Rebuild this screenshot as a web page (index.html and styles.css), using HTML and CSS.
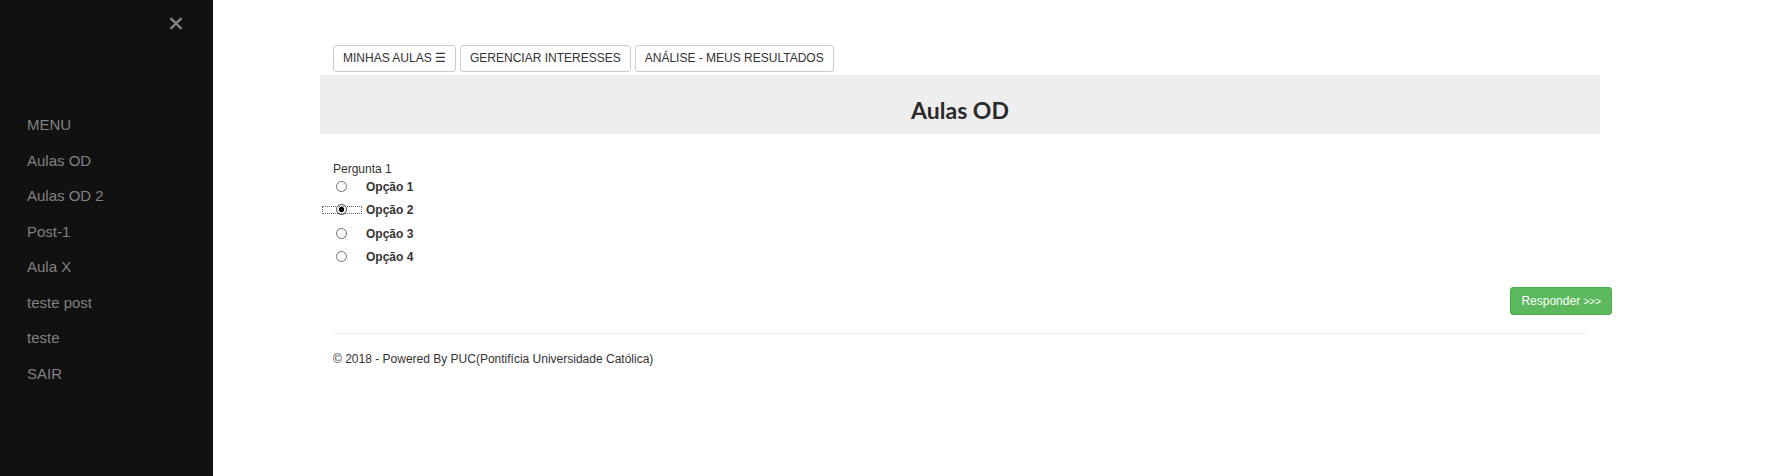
FILE: index.html
```
<!DOCTYPE html>
<html lang="pt">
<head>
<meta charset="utf-8">
<title>Aulas OD</title>
<link rel="stylesheet" href="styles.css">
</head>
<body>
<aside class="sidenav">
  <a class="closebtn" href="#" aria-label="Fechar">
    <svg width="14" height="13" viewBox="0 0 14 13"><path d="M1.5 1.2 L12.5 11.8 M12.5 1.2 L1.5 11.8" stroke="#818181" stroke-width="2.5" fill="none"/></svg>
  </a>
  <nav class="menu">
    <a href="#">MENU</a>
    <a href="#">Aulas OD</a>
    <a href="#">Aulas OD 2</a>
    <a href="#">Post-1</a>
    <a href="#">Aula X</a>
    <a href="#">teste post</a>
    <a href="#">teste</a>
    <a href="#">SAIR</a>
  </nav>
</aside>
<main class="main">
  <div class="container">
    <div class="tabs">
      <button class="btn">MINHAS AULAS ☰</button>
      <button class="btn">GERENCIAR INTERESSES</button>
      <button class="btn">ANÁLISE - MEUS RESULTADOS</button>
    </div>
    <div class="band"><h2 class="title">Aulas OD</h2></div>
    <form class="question">
      <div class="q-label">Pergunta 1</div>
      <label class="opt"><input type="radio" name="p1"><span>Opção 1</span></label>
      <label class="opt"><span class="focus-ring"></span><input type="radio" name="p1" checked><span>Opção 2</span></label>
      <label class="opt"><input type="radio" name="p1"><span>Opção 3</span></label>
      <label class="opt"><input type="radio" name="p1"><span>Opção 4</span></label>
      <div class="actions"><button type="button" class="btn-success">Responder <small>&gt;&gt;&gt;</small></button></div>
    </form>
    <hr class="sep">
    <footer class="footer">© 2018 - Powered By PUC(Pontifícia Universidade Católica)</footer>
  </div>
</main>
</body>
</html>
```
FILE: styles.css
```
html, body {
  margin: 0;
  padding: 0;
  background: #fff;
}
body {
  display: flex;
  min-height: 476px;
  font-family: "Liberation Sans", Arial, sans-serif;
  color: #333;
}
.sidenav {
  width: 213px;
  flex: none;
  background: #111;
  position: relative;
  min-height: 476px;
}
.closebtn {
  position: absolute;
  left: 169px;
  top: 17px;
  display: block;
  line-height: 0;
}
.menu {
  display: flex;
  flex-direction: column;
  padding-top: 107px;
}
.menu a {
  display: block;
  padding-left: 27px;
  font-size: 15px;
  line-height: 35.5px;
  color: #818181;
  text-decoration: none;
}
.main {
  flex: 1;
}
.container {
  width: 1280px;
  margin-left: 107px;
}
.tabs {
  display: flex;
  gap: 4px;
  padding-left: 13px;
  margin-top: 45px;
}
.btn {
  font-family: "Liberation Sans", Arial, sans-serif;
  font-size: 12px;
  line-height: 17px;
  padding: 4px 9px;
  border: 1px solid #ccc;
  border-radius: 3px;
  background: #fff;
  color: #333;
  margin: 0;
}
.band {
  margin-top: 3px;
  height: 59px;
  box-sizing: border-box;
  padding-top: 21px;
  background: #eee;
}
.title {
  margin: 0;
  text-align: center;
  font-family: Lato, "Open Sans", sans-serif;
  font-weight: 700;
  font-size: 23px;
  line-height: 28px;
  color: #2b2b2b;
}
.question {
  margin: 0;
  padding-left: 13px;
  padding-top: 27px;
  font-size: 12px;
}
.q-label {
  line-height: 16px;
  margin-bottom: 1.5px;
}
.opt {
  position: relative;
  display: flex;
  align-items: flex-start;
  line-height: 17px;
  height: 17px;
  margin-bottom: 6.5px;
  font-weight: 700;
}
.opt input {
  appearance: none;
  -webkit-appearance: none;
  width: 11px;
  height: 11px;
  box-sizing: border-box;
  border: 1px solid #6e6e6e;
  border-radius: 50%;
  background: #fff;
  margin: 2px 19px 0 3px;
  flex: none;
}
.opt input:checked {
  border-color: #444;
  background: radial-gradient(circle, #000 0 2.4px, #fff 3px);
}
.focus-ring {
  position: absolute;
  left: -11px;
  top: 4px;
  width: 40px;
  height: 8px;
  box-sizing: border-box;
  border: 1px dotted #666;
}
.actions {
  display: flex;
  justify-content: flex-end;
  margin-right: -12px;
  margin-top: 21px;
}
.btn-success {
  font-family: "Liberation Sans", Arial, sans-serif;
  font-size: 12px;
  line-height: 16px;
  padding: 5px 10px;
  height: 28px;
  box-sizing: border-box;
  background: #5cb85c;
  border: 1px solid #4cae4c;
  border-radius: 3px;
  color: #fff;
  margin: 0;
}
.btn-success small {
  font-size: 10px;
}
.sep {
  margin: 18px 14px 0 13px;
  border: 0;
  border-top: 1px solid #eee;
  height: 0;
}
.footer {
  padding-left: 13px;
  margin-top: 17px;
  font-size: 12px;
  line-height: 17px;
}
```
